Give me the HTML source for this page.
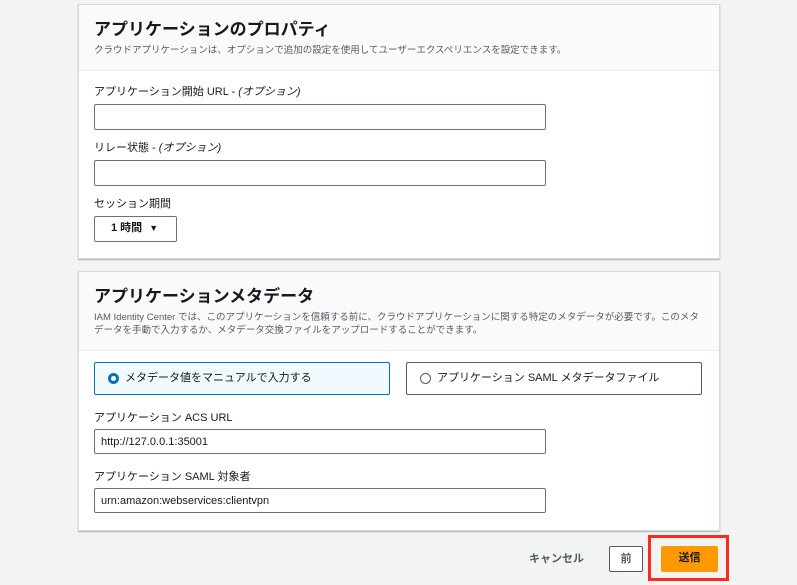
<!DOCTYPE html>
<html><head><meta charset="utf-8"><style>
*{box-sizing:border-box;margin:0;padding:0}
body{width:797px;height:585px;background:#f2f3f3;font-family:"Liberation Sans","Noto Sans CJK JP",sans-serif;color:#16191f;position:relative;overflow:hidden}
.card{position:absolute;left:78px;width:642px;background:#fff;border:1px solid #d5dbdb;box-shadow:0 1px 1px rgba(0,28,36,.3)}
.hd{background:#fafafa;border-bottom:1px solid #eaeded;padding:14px 15px 0}
.hd h2{font-size:17px;font-weight:bold;line-height:22px}
.hd p{font-size:9.5px;color:#545b64;line-height:13px;margin-top:3px}
.a{position:absolute}
.lbl{font-size:11px;color:#16191f}
.inp{position:absolute;border:1px solid #687078;border-radius:2px;background:#fff;font-size:11px;padding-left:6px;line-height:25px}
.btn{position:absolute;font-size:11px;font-weight:bold;text-align:center;line-height:25px;border-radius:2px}
</style></head><body>
<div class="card" style="top:4px;height:255px">
 <div class="hd" style="height:66px"><h2>アプリケーションのプロパティ</h2><p>クラウドアプリケーションは、オプションで追加の設定を使用してユーザーエクスペリエンスを設定できます。</p></div>
</div>
<div class="a lbl" style="left:94px;top:83px">アプリケーション開始 URL - <i>(オプション)</i></div>
<div class="inp" style="left:94px;top:104px;width:452px;height:26px"></div>
<div class="a lbl" style="left:94px;top:139px">リレー状態 - <i>(オプション)</i></div>
<div class="inp" style="left:94px;top:160px;width:452px;height:26px"></div>
<div class="a lbl" style="left:94px;top:195px">セッション期間</div>
<div class="inp" style="left:94px;top:216px;width:83px;height:26px;font-weight:bold;padding-left:16px;line-height:23px">1 時間 <span style="font-size:9px;margin-left:4px">▼</span></div>

<div class="card" style="top:271px;height:260px">
 <div class="hd" style="height:79px"><h2>アプリケーションメタデータ</h2><p>IAM Identity Center では、このアプリケーションを信頼する前に、クラウドアプリケーションに関する特定のメタデータが必要です。このメタデータを手動で入力するか、メタデータ交換ファイルをアップロードすることができます。</p></div>
</div>
<div class="a" style="left:94px;top:362px;width:296px;height:33px;border:1px solid #0073bb;background:#f1faff;border-radius:2px;font-size:11px;line-height:31px;padding-left:30px">
 <span style="position:absolute;left:13px;top:10px;width:11px;height:11px;border-radius:50%;border:3.5px solid #0073bb;background:#fff"></span>メタデータ値をマニュアルで入力する</div>
<div class="a" style="left:406px;top:362px;width:296px;height:33px;border:1px solid #545b64;background:#fff;border-radius:2px;font-size:11px;line-height:31px;padding-left:30px">
 <span style="position:absolute;left:13px;top:10px;width:11px;height:11px;border-radius:50%;border:1px solid #545b64"></span>アプリケーション SAML メタデータファイル</div>
<div class="a lbl" style="left:94px;top:409px">アプリケーション ACS URL</div>
<div class="inp" style="left:94px;top:429px;width:452px;height:25px">http://127.0.0.1:35001</div>
<div class="a lbl" style="left:94px;top:468px">アプリケーション SAML 対象者</div>
<div class="inp" style="left:94px;top:488px;width:452px;height:25px">urn:amazon:webservices:clientvpn</div>

<div class="a" style="left:529px;top:550px;font-size:11px;font-weight:bold;color:#545b64">キャンセル</div>
<div class="btn" style="left:609px;top:546px;width:34px;height:26px;border:1px solid #545b64;background:#fff;color:#545b64">前</div>
<div class="btn" style="left:661px;top:546px;width:57px;height:26px;background:#ff9900;color:#16191f">送信</div>
<div class="a" style="left:648px;top:535px;width:81px;height:46px;border:3px solid #ff2a1a"></div>
</body></html>
